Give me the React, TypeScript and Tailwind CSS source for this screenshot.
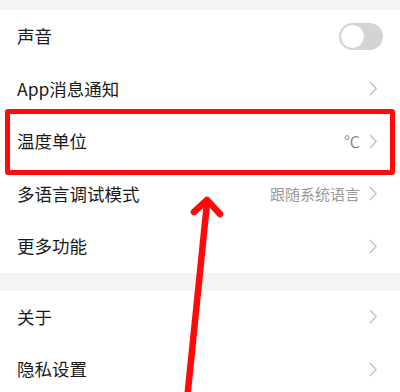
import React from "react";

const FONT = { fontFamily: '"Noto Sans CJK SC", "Noto Sans", sans-serif' };

function Chevron() {
  return (
    <svg width="9" height="15" viewBox="0 0 9 15" className="shrink-0">
      <path d="M1.5 1.5 L7.2 7.5 L1.5 13.5" fill="none" stroke="#c6c6c6" strokeWidth="1.7" strokeLinecap="round" strokeLinejoin="round" />
    </svg>
  );
}

function Toggle() {
  return (
    <div className="w-[44px] h-[27px] rounded-full bg-[#d4d4d4] p-[1px] flex items-center">
      <div className="w-[25px] h-[25px] rounded-full bg-white border border-[#cfcfcf]" />
    </div>
  );
}

function Row({ label, value, unit, toggle }: { label: string; value?: string; unit?: boolean; toggle?: boolean }) {
  return (
    <div className="h-[52.5px] flex items-center justify-between pl-[17px] pr-[22px] bg-white">
      <span className="text-[17.5px] text-[#1a1a1a]">{label}</span>
      {toggle ? (
        <div className="-mr-[5px]"><Toggle /></div>
      ) : (
        <div className="flex items-center gap-[9px]">
          {value && (
            <span className={`${unit ? "text-[16px] text-[#8a8a8a]" : "text-[15px] text-[#999999]"}`}>{value}</span>
          )}
          <Chevron />
        </div>
      )}
    </div>
  );
}

export default function App() {
  return (
    <div className="relative w-[400px] h-[392px] overflow-hidden bg-white" style={FONT}>
      <div className="h-[10px] bg-[#f4f4f4]" />
      <Row label="声音" toggle />
      <Row label="App消息通知" />
      <Row label="温度单位" value="℃" unit />
      <Row label="多语言调试模式" value="跟随系统语言" />
      <Row label="更多功能" />
      <div className="h-[18px] bg-[#f4f4f4]" />
      <Row label="关于" />
      <Row label="隐私设置" />

      <div className="absolute left-[5px] top-[109px] w-[390px] h-[66px] border-[5px] border-[#ff0a0a] rounded-[3px]" />
      <svg className="absolute left-0 top-0" width="400" height="392" viewBox="0 0 400 392">
        <path d="M187 400 L207 203" stroke="#ff0a0a" strokeWidth="6.5" fill="none" strokeLinecap="round" />
        <path d="M194 212 L207 200 L220 214" stroke="#ff0a0a" strokeWidth="6.5" fill="none" strokeLinecap="round" strokeLinejoin="round" />
      </svg>
    </div>
  );
}
